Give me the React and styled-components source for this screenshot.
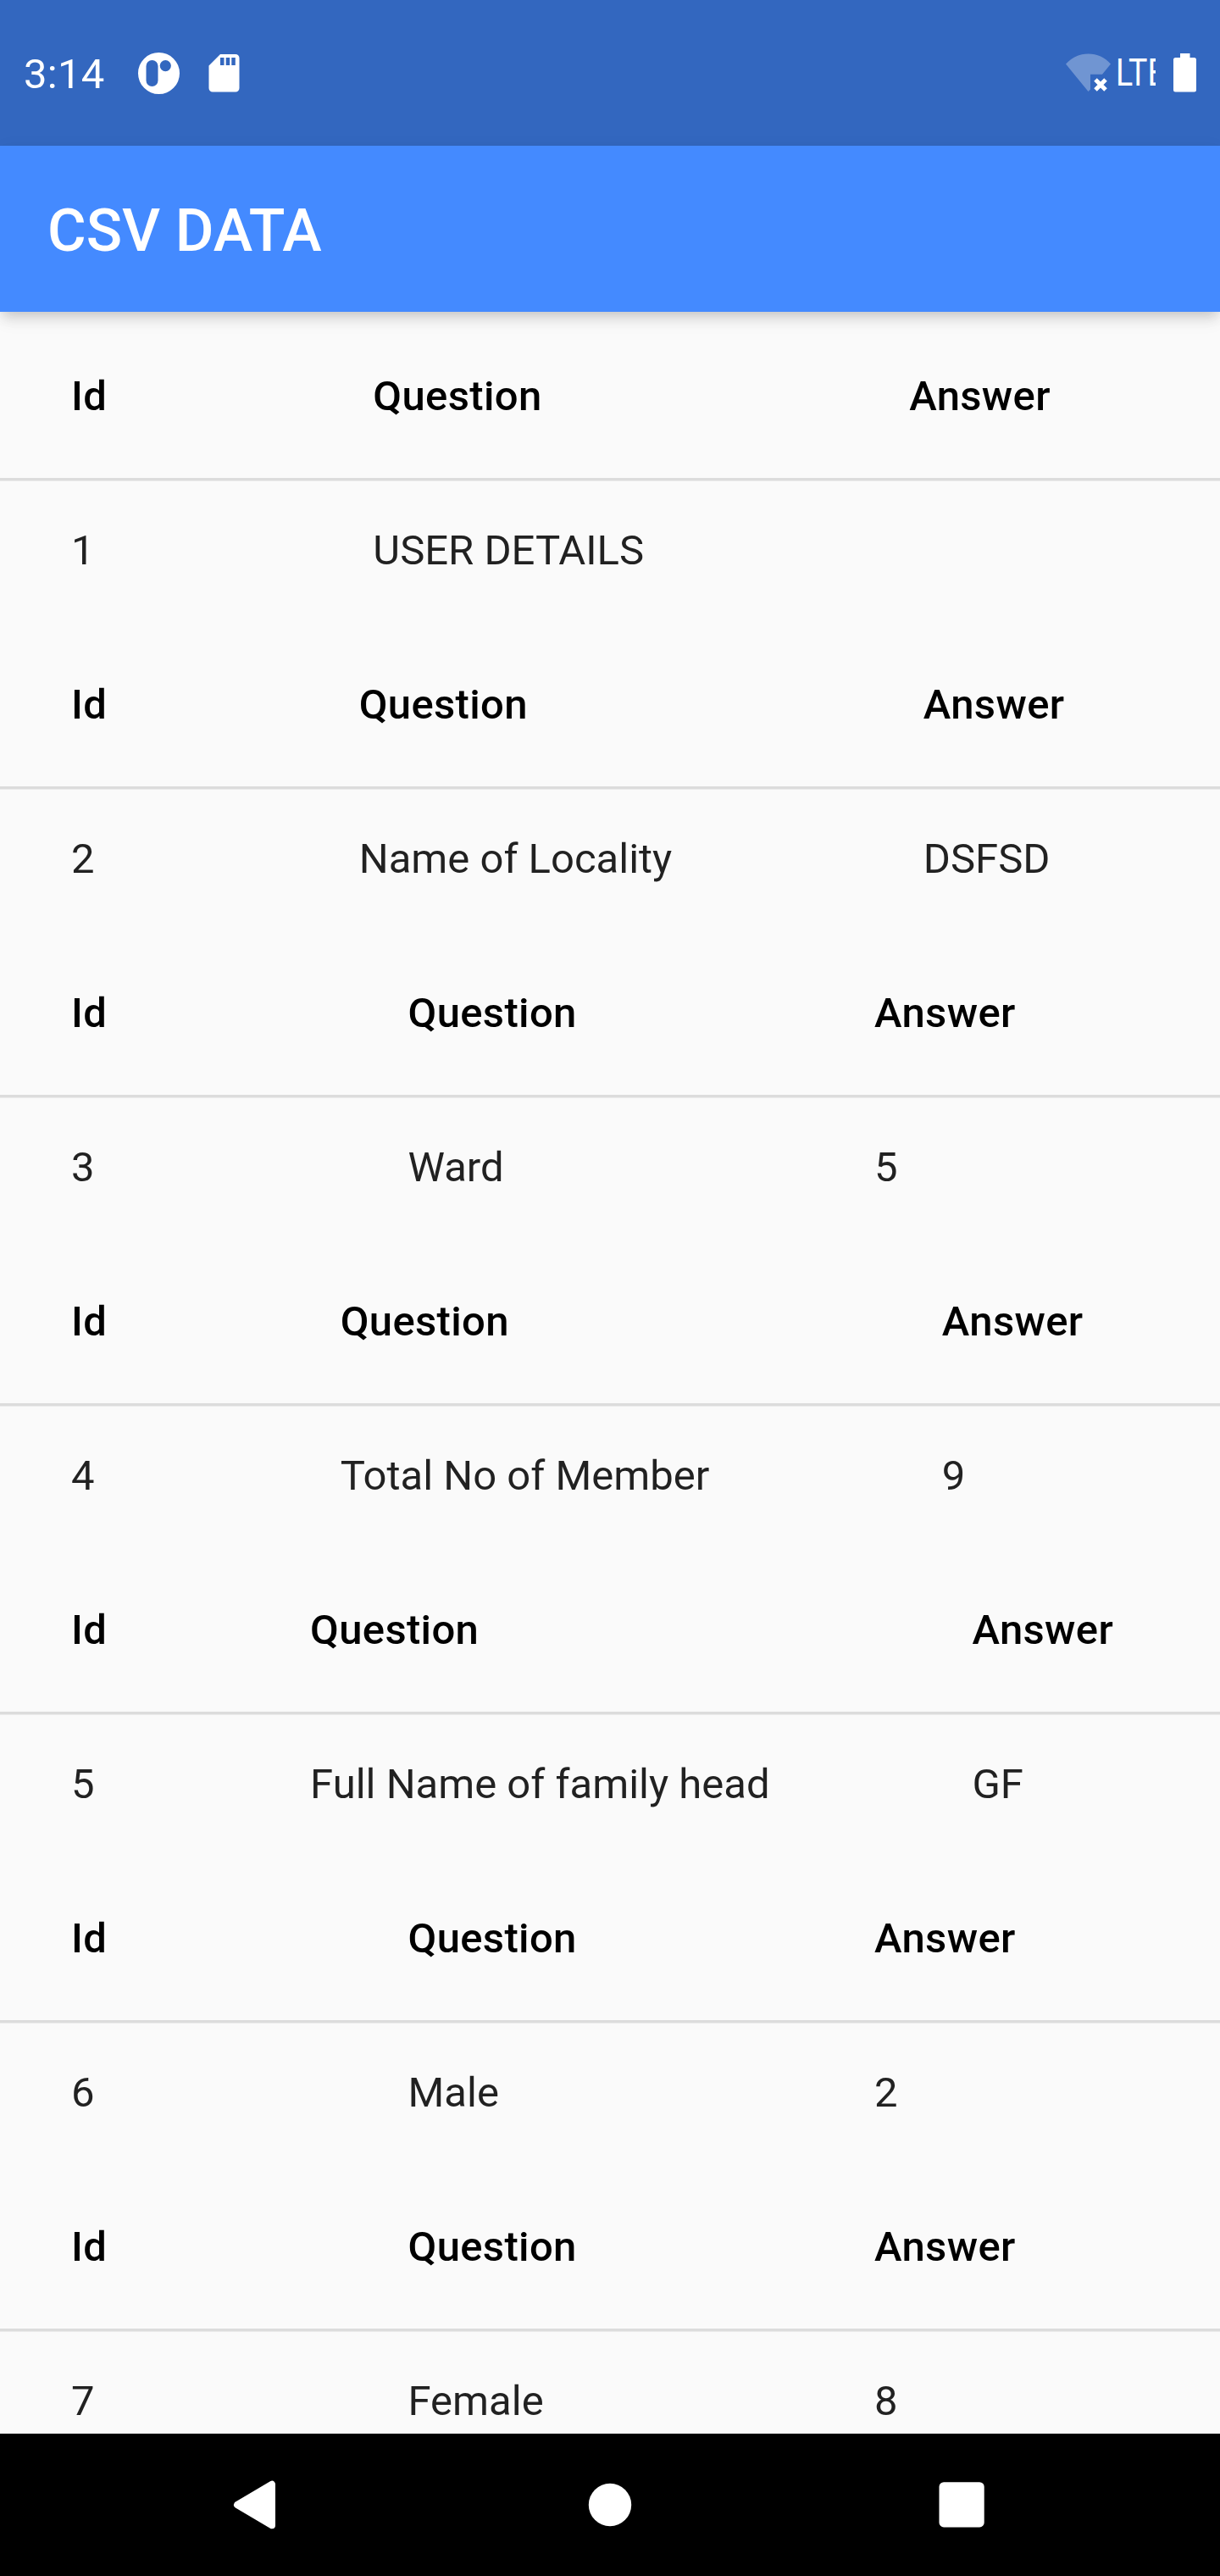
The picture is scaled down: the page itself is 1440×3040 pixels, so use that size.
import React from 'react';
import styled, { createGlobalStyle } from 'styled-components';

const GlobalStyle = createGlobalStyle`
  * { box-sizing: border-box; }
  html, body { margin: 0; padding: 0; background: #fafafa; }
  body { font-family: Roboto, "Liberation Sans", sans-serif; }
`;

const Screen = styled.div`
  width: 1440px;
  height: 3040px;
  display: flex;
  flex-direction: column;
  overflow: hidden;
  background: #fafafa;
`;

const StatusBar = styled.header`
  flex: none;
  height: 172px;
  padding: 0 28px;
  display: flex;
  align-items: center;
  justify-content: space-between;
  background: #3367bf;
  color: #fff;
`;

const StatusGroup = styled.div`
  display: flex;
  align-items: center;
  height: 60px;
`;

const Clock = styled.span`
  width: 135px;
  padding-top: 4px;
  font-size: 49px;
  line-height: 58px;
  letter-spacing: 0.3px;
  white-space: nowrap;
`;

const StatusIcon = styled.svg`
  display: block;
  flex: none;
  margin-left: ${(p) => p.$gap || 0}px;
`;

const Network = styled.span`
  width: 47px;
  margin-left: 6px;
  overflow: hidden;
  white-space: nowrap;
  font-size: 44px;
  line-height: 58px;
`;

const NetworkLabel = styled.span`
  display: inline-block;
  transform: scaleX(0.85);
  transform-origin: left center;
`;

const AppBar = styled.div`
  flex: none;
  height: 196px;
  padding: 4px 56px 0;
  display: flex;
  align-items: center;
  z-index: 1;
  background: #448aff;
  box-shadow:
    0 7px 14px -3.5px rgba(0, 0, 0, 0.17),
    0 14px 17.5px 0 rgba(0, 0, 0, 0.04),
    0 3.5px 25px 0 rgba(0, 0, 0, 0.04);
`;

const Title = styled.h1`
  margin: 0;
  color: #fff;
  font-size: 70px;
  font-weight: 500;
  line-height: 82px;
`;

const Content = styled.main`
  flex: 1;
  min-height: 0;
  overflow: hidden;
`;

const DataTable = styled.section`
  display: grid;
  grid-template-columns: auto auto auto;
`;

const Row = styled.div`
  display: grid;
  grid-column: 1 / -1;
  grid-template-columns: subgrid;
  align-items: center;
`;

const HeadingRow = styled(Row)`
  height: 196px;
  color: #000;
  font-weight: 500;
`;

const EntryRow = styled(Row)`
  height: 168px;
  color: rgba(0, 0, 0, 0.87);
  background: linear-gradient(#dcdcdc 3px, #ebebeb 3px, #ebebeb 4px, transparent 4px);
`;

const Cell = styled.div`
  padding: 4px 97px 0 98px;
  font-size: 49px;
  line-height: 58px;
  white-space: nowrap;
  &:first-child { padding-left: 84px; padding-right: 99px; }
  &:last-child { padding-right: 84px; }
`;

const HeadingCell = styled(Cell)`
  padding-right: 94px;
  letter-spacing: 0.35px;
  &:first-child { padding-right: 98px; }
  &:last-child { padding-right: 82px; }
`;

const NavBar = styled.nav`
  flex: none;
  height: 168px;
  display: flex;
  align-items: center;
  justify-content: center;
  gap: 332px;
  background: #000;
`;

const NavIcon = styled.svg`
  display: block;
  width: 84px;
  height: 84px;
  fill: #fff;
`;

const entries = [
  { id: 1, question: 'USER DETAILS', answer: '' },
  { id: 2, question: 'Name of Locality', answer: 'DSFSD' },
  { id: 3, question: 'Ward', answer: '5' },
  { id: 4, question: 'Total No of Member', answer: '9' },
  { id: 5, question: 'Full Name of family head', answer: 'GF' },
  { id: 6, question: 'Male', answer: '2' },
  { id: 7, question: 'Female', answer: '8' },
];

function Entry({ id, question, answer }) {
  return (
    <DataTable>
      <HeadingRow>
        <HeadingCell>Id</HeadingCell>
        <HeadingCell>Question</HeadingCell>
        <HeadingCell>Answer</HeadingCell>
      </HeadingRow>
      <EntryRow>
        <Cell>{id}</Cell>
        <Cell>{question}</Cell>
        <Cell>{answer}</Cell>
      </EntryRow>
    </DataTable>
  );
}

export default function App() {
  return (
    <Screen>
      <GlobalStyle />
      <StatusBar>
        <StatusGroup>
          <Clock>3:14</Clock>
          <StatusIcon width="49" height="50" viewBox="0 -1 49 50">
            <path
              fill="#fff"
              fillRule="evenodd"
              d="M24.5 0a24.5 24.5 0 1 1 0 49a24.5 24.5 0 0 1 0-49zM16.5 9A7 7 0 0 0 9.500 16v17a7 7 0 0 0 14 0V16a7 7 0 0 0-7-7zM32.300 9a6.600 6.600 0 1 0 0 13.200a6.600 6.600 0 0 0 0-13.200z"
            />
          </StatusIcon>
          <StatusIcon $gap={34} width="37" height="46" viewBox="0 -0.5 37 46">
            <path
              fill="#fff"
              fillRule="evenodd"
              d="M14 0.500H32a4.500 4.500 0 0 1 4.500 4.500V40.500a4.500 4.500 0 0 1-4.500 4.500H5a4.500 4.500 0 0 1-4.500-4.500V14zM14 4.500v9h4.500v-9zM20.700 4.500v9h4.500v-9zM27.300 4.500v9h4.500v-9z"
            />
          </StatusIcon>
        </StatusGroup>
        <StatusGroup>
          <StatusIcon width="53" height="46" viewBox="0 0 53 46">
            <path
              fill="#fff"
              fillOpacity="0.3"
              d="M0 12.500C7 4.500 16 0.500 26.500 0.500S46 4.500 53 12.500L43 24.700H29V42.500L26.500 45z"
            />
            <path d="M35 31l12 12M47 31l-12 12" stroke="#fff" strokeWidth="5" />
          </StatusIcon>
          <Network>
            <NetworkLabel>LTE</NetworkLabel>
          </Network>
          <StatusIcon $gap={21} width="27" height="46" viewBox="0 0 27 46">
            <path
              fill="#fff"
              d="M8 0H19.500V5H24.500a2.500 2.500 0 0 1 2.500 2.500V43a2.500 2.500 0 0 1-2.500 2.500H2.500A2.500 2.500 0 0 1 0 43V7.500A2.500 2.500 0 0 1 2.500 5H8z"
            />
          </StatusIcon>
        </StatusGroup>
      </StatusBar>
      <AppBar>
        <Title>CSV DATA</Title>
      </AppBar>
      <Content>
        {entries.map((entry) => (
          <Entry key={entry.id} {...entry} />
        ))}
      </Content>
      <NavBar>
        <NavIcon viewBox="0 0 84 84">
          <path
            d="M18 42L59 17.700V66.300z"
            stroke="#fff"
            strokeWidth="8"
            strokeLinejoin="round"
          />
        </NavIcon>
        <NavIcon viewBox="0 0 84 84">
          <circle cx="42" cy="42" r="25.200" />
        </NavIcon>
        <NavIcon viewBox="0 0 84 84">
          <rect x="14.500" y="15.200" width="53.200" height="53.200" rx="5.500" />
        </NavIcon>
      </NavBar>
    </Screen>
  );
}
